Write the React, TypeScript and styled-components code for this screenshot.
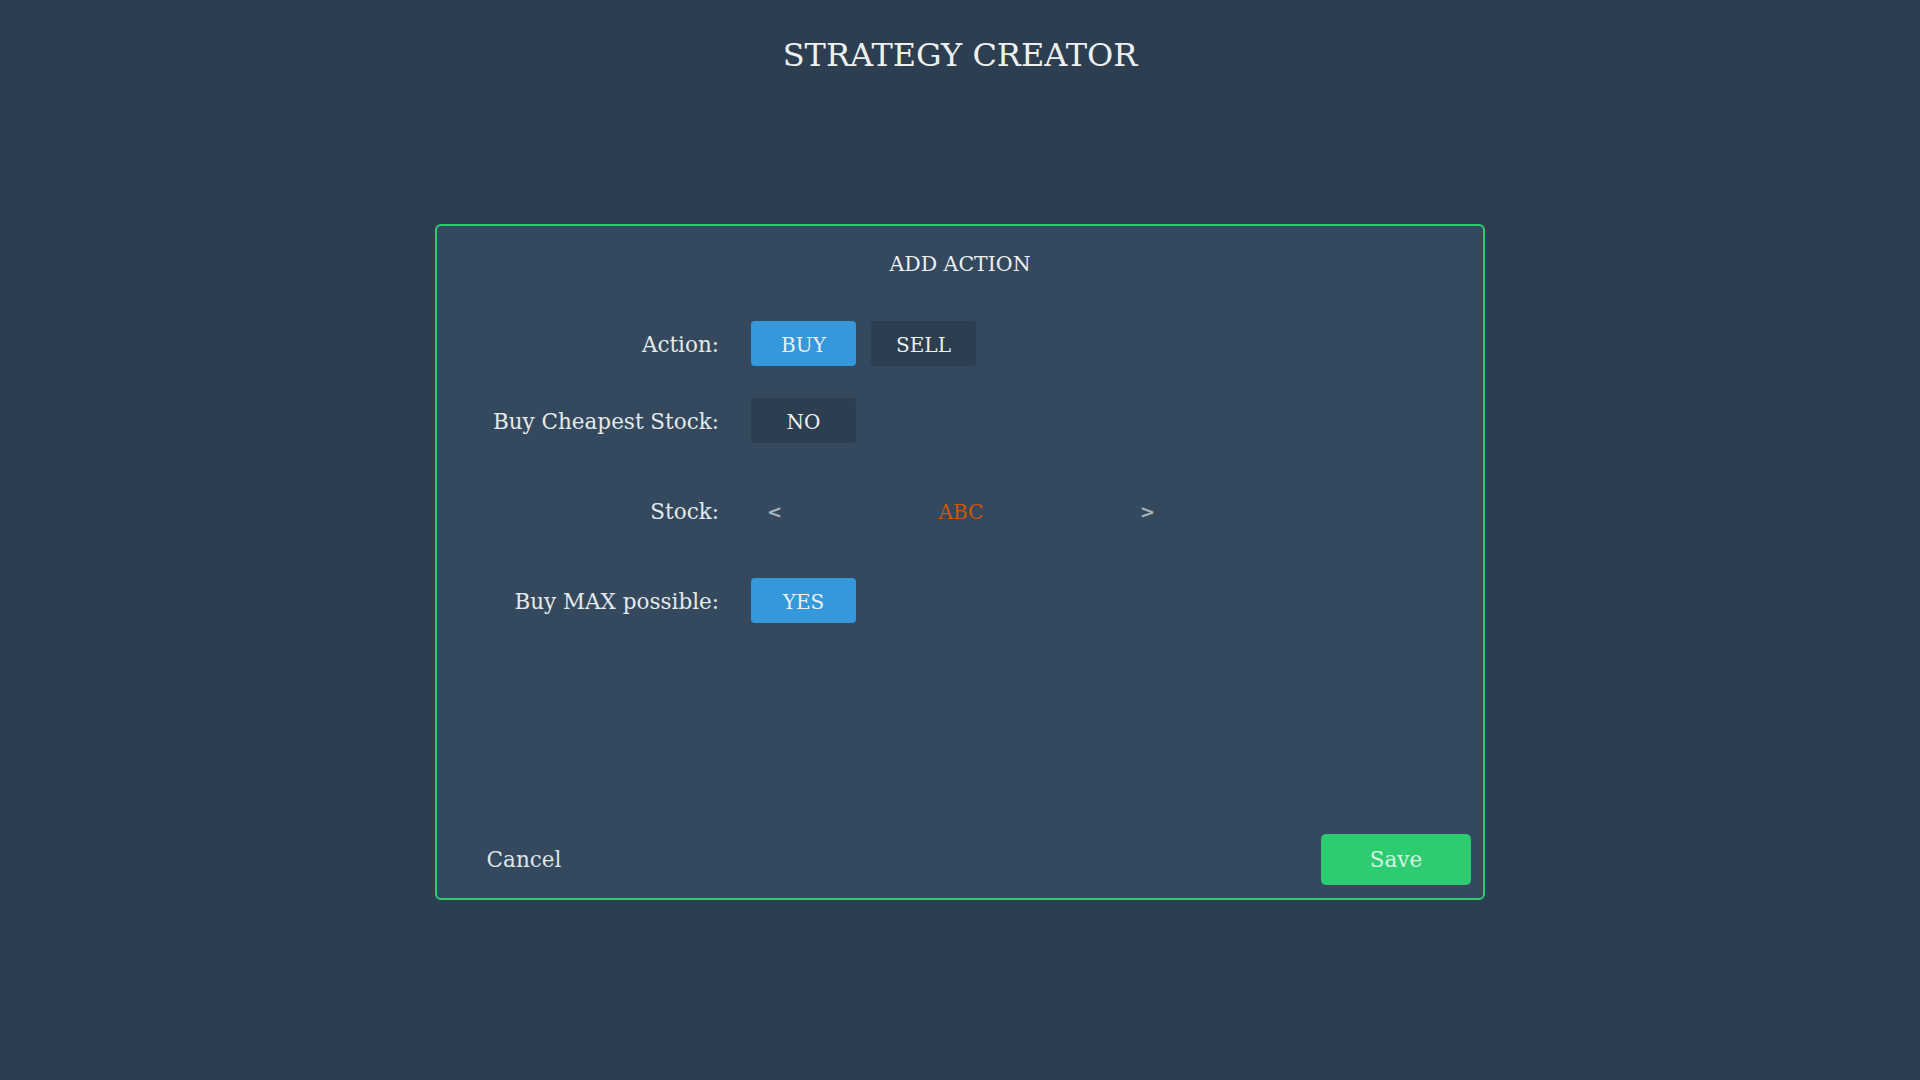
import * as React from 'react';
import styled, { createGlobalStyle } from 'styled-components';

const GlobalStyle = createGlobalStyle`
  html, body {
    margin: 0;
    padding: 0;
    background-color: #2c3e50;
  }

  body {
    font-family: 'DejaVu Serif', 'Liberation Serif', serif;
    color: #ecf0f1;
  }
`;

const Page = styled.div`
  min-height: 1080px;
  padding-top: 30px;
  box-sizing: border-box;
  display: flex;
  flex-direction: column;
  align-items: center;
`;

const PageTitle = styled.h1`
  margin: 0;
  font-size: 32px;
  font-weight: normal;
  line-height: 50px;
  color: #ecf0f1;
`;

const Panel = styled.div`
  margin-top: 144px;
  width: 1050px;
  height: 676px;
  box-sizing: border-box;
  background-color: #34495e;
  border: 2px solid #2ecc71;
  border-radius: 6px;
  display: flex;
  flex-direction: column;
  padding-top: 18px;
`;

const PanelTitle = styled.div`
  text-align: center;
  font-size: 20.5px;
  line-height: 40px;
`;

const Form = styled.div`
  margin-top: 37px;
  display: flex;
  flex-direction: column;
  gap: 32px;
`;

const Row = styled.div<{ $height?: number }>`
  display: grid;
  grid-template-columns: 282px auto;
  column-gap: 32px;
  align-items: center;
  height: ${(p) => p.$height || 45}px;
`;

const Label = styled.div`
  text-align: right;
  font-size: 21.5px;
  line-height: 30px;
  padding-top: 2px;
  color: #e4e9ea;
`;

const Options = styled.div`
  display: flex;
  gap: 15px;
`;

const Toggle = styled.button<{ $active?: boolean }>`
  width: 105px;
  height: 45px;
  padding: 2px 0 0;
  border: 0;
  border-radius: 4px;
  background-color: ${(p) => (p.$active ? '#3498db' : '#2c3e50')};
  color: #ecf0f1;
  font-family: 'DejaVu Serif', serif;
  font-size: 20px;
  cursor: pointer;
`;

const Selector = styled.div`
  width: 420px;
  display: flex;
  align-items: center;
  justify-content: space-between;
  padding-top: 2px;
`;

const Arrow = styled.button`
  background: none;
  border: 0;
  padding: 0 16px;
  color: #aab4bb;
  font-family: 'DejaVu Sans', sans-serif;
  font-weight: bold;
  font-size: 18px;
  cursor: pointer;
`;

const StockName = styled.span`
  color: #d35400;
  font-size: 20px;
`;

const Footer = styled.div`
  margin-top: auto;
  display: flex;
  justify-content: space-between;
  padding: 0 12px 13px;
`;

const FooterButton = styled.button<{ $primary?: boolean }>`
  width: 150px;
  height: 51px;
  border: 0;
  border-radius: 5px;
  background-color: ${(p) => (p.$primary ? '#2ecc71' : 'transparent')};
  color: ${(p) => (p.$primary ? '#d4f3e0' : '#dfe4e6')};
  font-family: 'DejaVu Serif', serif;
  font-size: 21.5px;
  cursor: pointer;
`;

export default function App() {
  const [action, setAction] = React.useState('BUY');
  const [cheapest, setCheapest] = React.useState(false);
  const [max, setMax] = React.useState(true);

  return (
    <>
      <GlobalStyle />
      <Page>
        <PageTitle>STRATEGY CREATOR</PageTitle>
        <Panel>
          <PanelTitle>ADD ACTION</PanelTitle>
          <Form>
            <Row>
              <Label>Action:</Label>
              <Options>
                <Toggle $active={action === 'BUY'} onClick={() => setAction('BUY')}>
                  BUY
                </Toggle>
                <Toggle $active={action === 'SELL'} onClick={() => setAction('SELL')}>
                  SELL
                </Toggle>
              </Options>
            </Row>
            <Row>
              <Label>Buy Cheapest Stock:</Label>
              <Options>
                <Toggle $active={cheapest} onClick={() => setCheapest(!cheapest)}>
                  {cheapest ? 'YES' : 'NO'}
                </Toggle>
              </Options>
            </Row>
            <Row $height={71}>
              <Label>Stock:</Label>
              <Selector>
                <Arrow>&lt;</Arrow>
                <StockName>ABC</StockName>
                <Arrow>&gt;</Arrow>
              </Selector>
            </Row>
            <Row>
              <Label>Buy MAX possible:</Label>
              <Options>
                <Toggle $active={max} onClick={() => setMax(!max)}>
                  {max ? 'YES' : 'NO'}
                </Toggle>
              </Options>
            </Row>
          </Form>
          <Footer>
            <FooterButton>Cancel</FooterButton>
            <FooterButton $primary>Save</FooterButton>
          </Footer>
        </Panel>
      </Page>
    </>
  );
}
